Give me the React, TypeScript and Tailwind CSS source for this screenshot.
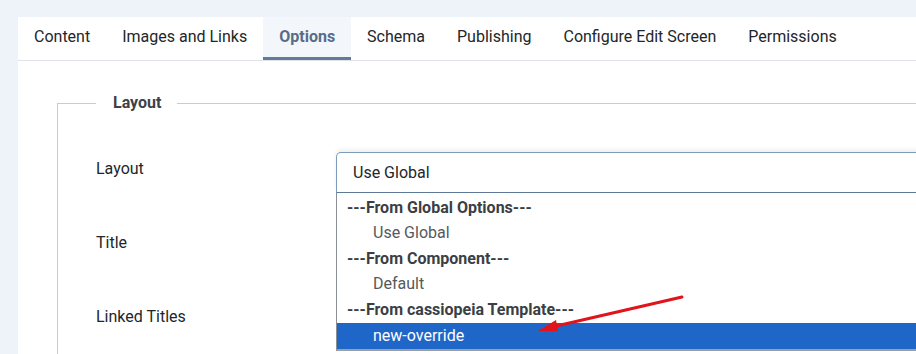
import React from 'react'

const tabs = ['Content', 'Images and Links', 'Options', 'Schema', 'Publishing', 'Configure Edit Screen', 'Permissions']

const options: { label: string; header?: boolean; selected?: boolean }[] = [
  { label: '---From Global Options---', header: true },
  { label: 'Use Global' },
  { label: '---From Component---', header: true },
  { label: 'Default' },
  { label: '---From cassiopeia Template---', header: true },
  { label: 'new-override', selected: true },
]

function LayoutSelect() {
  return (
    <div className="relative w-[620px] shrink-0">
      <div className="h-[41px] flex items-center pl-4 border border-[#7d9bbb] border-b-[#5f7a96] rounded-t-[5px] bg-white text-[16px] text-[#22262a] shadow-[0_-3px_4px_rgba(0,0,0,0.06)]">
        Use Global
      </div>
      <div className="absolute left-0 top-full w-full z-10 bg-white border-l border-[#8a8f96] border-b-2 border-b-[#9aa0a6] pt-[2px]">
        {options.map((o) => (
          <div
            key={o.label}
            className={
              'flex items-center text-[16px] whitespace-nowrap ' +
              (o.selected ? 'bg-[#1f66c9] text-white h-[26px] ' : 'h-[25.5px] ') +
              (o.header ? 'pl-[10px] font-bold text-[#3b3f44]' : 'pl-[36px]') +
              (!o.header && !o.selected ? ' text-[#55595e]' : '')
            }
          >
            {o.label}
          </div>
        ))}
      </div>
    </div>
  )
}

export default function App() {
  return (
    <div className="relative w-[916px] h-[354px] overflow-hidden bg-[#eef3f9] pt-[17px] pl-[18px] font-['Roboto',sans-serif]">
      <div className="bg-white h-full">
        <div className="flex h-[44px] border-b border-[#dfe3e8]">
          {tabs.map((t) => (
            <div
              key={t}
              className={
                'px-4 flex items-center text-[16px] whitespace-nowrap ' +
                (t === 'Options'
                  ? 'bg-[#f3f6fb] font-bold text-[#586c89] border-b-[3px] border-[#637a98]'
                  : 'text-[#22262a] pb-[3px]')
              }
            >
              {t}
            </div>
          ))}
        </div>

        <fieldset className="ml-[39px] mt-[30px] border border-[#c8ccd0] border-r-0 border-b-0 pl-[38px] pt-[37px] h-[400px] min-w-0">
          <legend className="ml-0 pl-[17px] pr-4 text-[16px] font-bold text-[#3d4248]">Layout</legend>

          <div className="flex items-start h-[41px]">
            <div className="w-[240px] shrink-0 pt-[7px] leading-[20px] text-[16px] text-[#22262a]">Layout</div>
            <LayoutSelect />
          </div>
          <div className="flex items-start h-[41px] mt-[33px]">
            <div className="w-[240px] pt-[7px] leading-[20px] text-[16px] text-[#22262a]">Title</div>
          </div>
          <div className="flex items-start h-[41px] mt-[33px]">
            <div className="w-[240px] pt-[7px] leading-[20px] text-[16px] text-[#22262a]">Linked Titles</div>
          </div>
        </fieldset>
      </div>

      <svg className="absolute left-0 top-0 z-20 pointer-events-none" width="916" height="354">
        <line x1="682" y1="297" x2="552" y2="327" stroke="#e0141a" strokeWidth="3" strokeLinecap="round" />
        <polygon points="538,331 556,320 558,331" fill="#e0141a" />
      </svg>
    </div>
  )
}
